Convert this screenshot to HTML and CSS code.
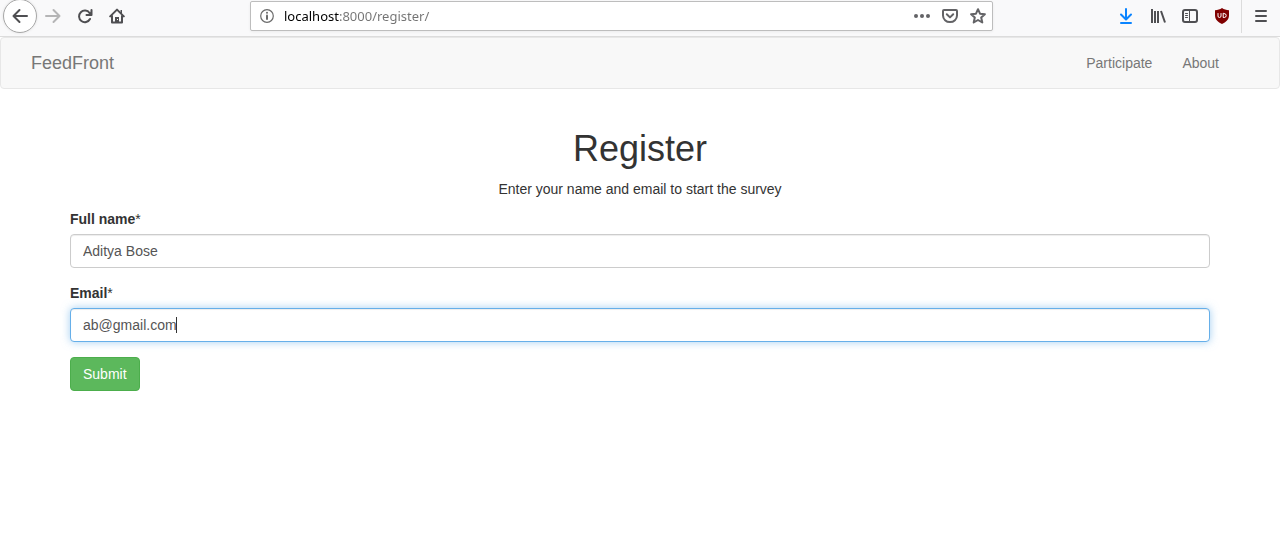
FILE: index.html
```html
<!DOCTYPE html>
<html lang="en">
<head>
<meta charset="utf-8">
<meta name="viewport" content="width=device-width, initial-scale=1">
<title>Register</title>
<link rel="stylesheet" href="styles.css">
</head>
<body>
<header class="toolbar">
  <div class="tool-group tool-group-left">
    <button class="tool tool-back" type="button" aria-label="Back">
      <svg class="icon" viewBox="0 0 16 16"><path d="M15 8H1.500M7.500 2L1.500 8l6 6"/></svg>
    </button>
    <button class="tool tool-disabled" type="button" aria-label="Forward" disabled>
      <svg class="icon" viewBox="0 0 16 16"><path d="M1 8h13.500M8.500 2l6 6-6 6"/></svg>
    </button>
    <button class="tool" type="button" aria-label="Reload">
      <svg class="icon" viewBox="0 0 16 16"><path d="M12.600 5A5.800 5.800 0 1 0 13 11"/><path d="M14.500 2v5H9.500"/><path class="solid" d="M14.500 3v4h-4z"/></svg>
    </button>
    <button class="tool" type="button" aria-label="Home">
      <svg class="icon" viewBox="0 0 16 16"><path d="M1.200 8.400L8 1.600l6.800 6.800M3 8v6.500h10V8"/><path class="solid" d="M6 15V9h4v6zM11.500 2H13v4l-1.500-1.500z"/><path class="knob" d="M8 11h1v1H8z"/></svg>
    </button>
  </div>
  <div class="address">
    <svg class="icon icon-info" viewBox="0 0 16 16"><circle cx="8" cy="8" r="6.300"/><path class="bar" d="M8 7.500v3.500"/><circle class="solid" cx="8" cy="4.800" r="1"/></svg>
    <input class="address-input" type="text" aria-label="Address" value="localhost:8000/register/">
    <button class="tool tool-small" type="button" aria-label="Page actions">
      <svg class="icon" viewBox="0 0 16 16"><g class="solid"><circle cx="2" cy="8" r="2"/><circle cx="8" cy="8" r="2"/><circle cx="14" cy="8" r="2"/></g></svg>
    </button>
    <button class="tool tool-small" type="button" aria-label="Save to Pocket">
      <svg class="icon" viewBox="0 0 16 16"><path d="M2 2h12a1 1 0 0 1 1 1v4.500a7 6.600 0 0 1-14 0V3a1 1 0 0 1 1-1z"/><path d="M4.800 6.300L8 9.400l3.200-3.100"/></svg>
    </button>
    <button class="tool tool-small" type="button" aria-label="Bookmark">
      <svg class="icon" viewBox="0 0 16 16"><path d="M8 1.200l2 4.500 4.900.5-3.700 3.300 1.100 5L8 12l-4.300 2.500 1.100-5L1.100 6.200 6 5.700z"/></svg>
    </button>
  </div>
  <div class="tool-group">
    <button class="tool tool-download" type="button" aria-label="Downloads">
      <svg class="icon" viewBox="0 0 16 16"><path d="M8 1V11M3 6.500l5 5 5-5M3 15h10"/></svg>
    </button>
    <button class="tool" type="button" aria-label="Library">
      <svg class="icon icon-square" viewBox="0 0 16 16"><path d="M2 1v14M5 3v12M8 3v12M11 3l4 11.500"/></svg>
    </button>
    <button class="tool" type="button" aria-label="Sidebars">
      <svg class="icon" viewBox="0 0 16 16"><rect x="1" y="2" width="14" height="12" rx="2"/><path class="thin" d="M7.500 2v12M3.500 5.500h2M3.500 7.500h2M3.500 9.500h2"/></svg>
    </button>
    <button class="tool" type="button" aria-label="uBlock Origin">
      <svg class="icon" viewBox="0 0 16 16"><path class="shield" d="M8 0c2 1.400 4.300 2.200 7 2.200v5C15 11.500 12 14 8 16c-4-2-7-4.500-7-8.800v-5C3.700 2.200 6 1.400 8 0z"/><path class="shield-mark" d="M4 5.500V8a1.500 1.500 0 0 0 3 0V5.500M9.200 5.500v4h1a2 2 0 0 0 0-4z"/></svg>
    </button>
    <button class="tool tool-menu" type="button" aria-label="Menu">
      <svg class="icon" viewBox="0 0 16 16"><path d="M3 3h10M3 8h10M3 13h10"/></svg>
    </button>
  </div>
</header>

<nav class="navbar">
  <a class="brand" href="#">FeedFront</a>
  <div class="nav-links">
    <a class="nav-link" href="#">Participate</a>
    <a class="nav-link" href="#">About</a>
  </div>
</nav>

<main class="container">
  <h1 class="title">Register</h1>
  <p class="lead">Enter your name and email to start the survey</p>
  <form class="form">
    <div class="form-group">
      <label class="label" for="name">Full name<span class="asterisk">*</span></label>
      <input class="control" id="name" type="text" value="Aditya Bose">
    </div>
    <div class="form-group">
      <label class="label" for="email">Email<span class="asterisk">*</span></label>
      <input class="control control-active" id="email" type="email" value="ab@gmail.com">
    </div>
    <button class="submit" type="submit">Submit</button>
  </form>
</main>
</body>
</html>
```
FILE: styles.css
```css
* {
  box-sizing: border-box;
}

body {
  margin: 0;
  background: #fff;
  color: #333;
  font: 14px/20px "Liberation Sans", Arial, sans-serif;
}

a {
  text-decoration: none;
}

button,
input {
  font: inherit;
}

/* Browser toolbar */
.toolbar {
  display: flex;
  align-items: center;
  height: 37px;
  padding-bottom: 4px;
  overflow: hidden;
  background: #f9f9fa;
  border-bottom: 1px solid #dcdcdc;
}

.tool-group {
  display: flex;
  align-items: center;
}

.tool-group-left {
  padding-left: 3px;
}

.tool {
  display: flex;
  flex: none;
  align-items: center;
  justify-content: center;
  width: 32px;
  height: 32px;
  padding: 0;
  border: 0;
  background: none;
  color: #4f4f52;
}

.tool-back {
  width: 34px;
  height: 34px;
  border: 1px solid #a8a8a8;
  border-radius: 50%;
  background: #fff;
  box-shadow: 0 0 3px rgba(0, 0, 0, 0.1);
}

.tool-disabled {
  color: #b5b5b6;
}

.tool-small {
  width: 28px;
  height: 28px;
  color: #636366;
}

.tool-download {
  color: #0a84ff;
}

.tool-menu {
  width: 39px;
  height: 34px;
  margin-left: 3px;
  border-left: 1px solid #dcdcdc;
}

.icon {
  flex: none;
  width: 16px;
  height: 16px;
  fill: none;
  stroke: currentColor;
  stroke-width: 2;
  stroke-linecap: round;
  stroke-linejoin: round;
}

.icon-square {
  stroke-linecap: butt;
}

.icon .solid {
  fill: currentColor;
  stroke: none;
}

.icon .thin {
  stroke-width: 1;
}

.icon .bar {
  stroke-width: 2;
}

.icon .knob {
  fill: #f9f9fa;
  stroke: none;
}

.icon .shield {
  fill: #800000;
  stroke: none;
}

.icon .shield-mark {
  stroke: #fff;
  stroke-width: 1;
}

.icon-info {
  color: #6b6b6b;
  stroke-width: 1.2;
}

.address {
  display: flex;
  flex: 1;
  align-items: center;
  height: 30px;
  min-width: 0;
  margin: 0 117px;
  padding-left: 8px;
  background: #fff;
  border: 1px solid #bdbdbd;
  border-radius: 2px;
  box-shadow: 0 1px 3px rgba(0, 0, 0, 0.06);
}

/* The host is dark, the rest of the address is grey */
.address-input {
  flex: 1;
  min-width: 0;
  height: 20px;
  margin-left: 9px;
  padding: 0;
  border: 0;
  outline: 0;
  background: linear-gradient(to right, #000 55px, #737373 55px);
  background-clip: text;
  color: transparent;
  font: 13px/20px "Noto Sans", "Open Sans", sans-serif;
}

/* Site navigation */
.navbar {
  display: flex;
  justify-content: space-between;
  min-height: 52px;
  margin-bottom: 20px;
  padding: 0 45px 0 15px;
  background: #f8f8f8;
  border: 1px solid #e7e7e7;
  border-radius: 4px;
}

.brand,
.nav-link {
  padding: 15px;
  color: #777;
}

.brand {
  font-size: 18px;
}

.nav-links {
  display: flex;
}

/* Registration form */
.container {
  max-width: 1170px;
  margin: 0 auto;
  padding: 20px 15px;
}

.title {
  margin: 0 0 10px;
  font-size: 36px;
  font-weight: 400;
  line-height: 40px;
  text-align: center;
}

.lead {
  margin: 0 0 10px;
  text-align: center;
}

.form-group {
  margin-bottom: 15px;
}

.label {
  display: block;
  margin-bottom: 5px;
  font-weight: 700;
}

.asterisk {
  font-weight: 400;
}

.control {
  display: block;
  width: 100%;
  height: 34px;
  padding: 6px 12px;
  border: 1px solid #ccc;
  border-radius: 4px;
  outline: 0;
  background: #fff;
  box-shadow: inset 0 1px 1px rgba(0, 0, 0, 0.075);
  color: #555;
}

/* Active field, with its text cursor after the value */
.control-active {
  border-color: #66afe9;
  background: linear-gradient(#333, #333) 105px 8px / 1px 16px no-repeat #fff;
  box-shadow: inset 0 1px 1px rgba(0, 0, 0, 0.075), 0 0 8px rgba(102, 175, 233, 0.6);
  caret-color: transparent;
}

.submit {
  display: block;
  padding: 6px 12px;
  border: 1px solid #4cae4c;
  border-radius: 4px;
  background: #5cb85c;
  color: #fff;
}
```
